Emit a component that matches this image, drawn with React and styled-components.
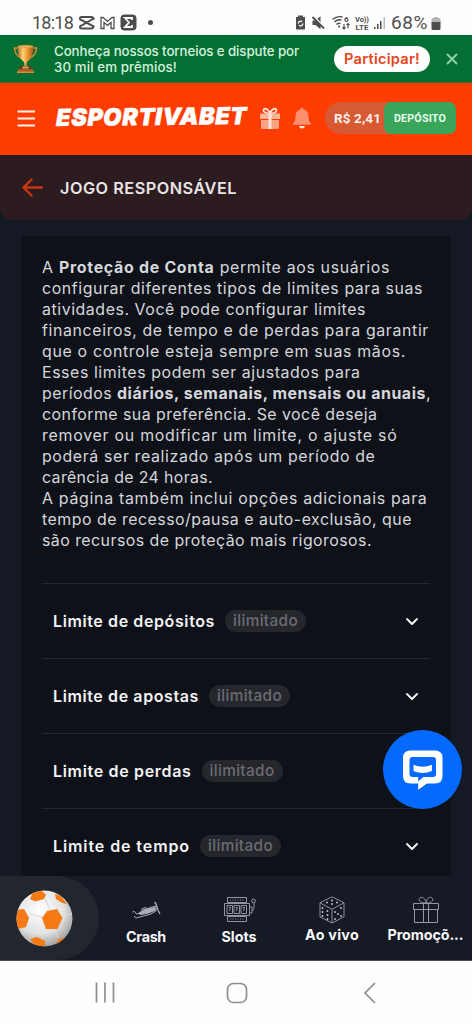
import React, { useLayoutEffect, useRef, useState } from 'react';
import styled, { createGlobalStyle } from 'styled-components';

const GlobalStyle = createGlobalStyle`
  * { box-sizing: border-box; }
  body {
    margin: 0;
    background: #fff;
    font-family: Inter, 'Open Sans', sans-serif;
  }
  button {
    border: 0;
    padding: 0;
    background: none;
    font-family: inherit;
    color: inherit;
    cursor: pointer;
  }
  svg { display: block; flex: none; }
`;

const Screen = styled.div`
  display: flex;
  flex-direction: column;
  width: 472px;
  height: 1024px;
  overflow: hidden;
  background: #141923;
`;

const FitSpan = styled.span`
  display: inline-block;
  white-space: pre;
  font-weight: ${(p) => p.$weight || 'inherit'};
`;

// Tracks the text out so that it fills the given width
function Fit({ w, weight, children }) {
  const ref = useRef(null);
  const [spacing, setSpacing] = useState(0);
  useLayoutEffect(() => {
    const natural = ref.current.getBoundingClientRect().width;
    setSpacing((w - natural) / children.length);
  }, []);
  return (
    <FitSpan ref={ref} $weight={weight} style={{ letterSpacing: `${spacing}px` }}>
      {children}
    </FitSpan>
  );
}

/* status bar */

const StatusBar = styled.div`
  display: flex;
  justify-content: space-between;
  flex: none;
  height: 35px;
  padding: 11px 31px 0 32px;
  background: #fefefe;
  color: #505050;
  font-family: Roboto, sans-serif;
  font-size: 18px;
  line-height: 24px;
`;

const StatusGroup = styled.div`
  display: flex;
  align-items: center;
  gap: ${(p) => p.$gap}px;
  height: 24px;
`;

const Percent = styled.span`
  font-size: 19px;
`;

/* tournament banner */

const Banner = styled.div`
  display: flex;
  align-items: center;
  flex: none;
  height: 48px;
  padding: 0 13px;
  background: #046f33;
  border-bottom: 1px solid #3c6a22;
`;

const BannerText = styled.div`
  width: 280px;
  margin-left: 16px;
  color: #d3f3df;
  font-size: 13.3px;
  font-weight: 500;
  line-height: 16px;
`;

const JoinButton = styled.button`
  width: 96px;
  height: 26px;
  border-radius: 13px;
  background: #fff;
  color: #e8431d;
  font-size: 14.6px;
  font-weight: 600;
`;

const CloseButton = styled.button`
  margin-left: 16px;
`;

/* main header */

const Header = styled.header`
  display: flex;
  align-items: center;
  flex: none;
  height: 72px;
  padding: 0 16px 2px 17px;
  background: #ff3d03;
`;

const Logo = styled.div`
  width: 192px;
  height: 26px;
  margin: -2px 11px 0 20px;
  color: #fff;
  font-size: 23.5px;
  font-style: italic;
  font-weight: 900;
  line-height: 26px;
  transform: skewY(-0.6deg);
  -webkit-text-stroke: 0.5px #fff;
`;

const Wallet = styled.div`
  display: flex;
  align-items: center;
  width: 131px;
  height: 32px;
  margin-left: 12px;
  border-radius: 16px 9px 9px 16px;
  background: #d85a35;
`;

const Balance = styled.span`
  width: 59px;
  padding-left: 9px;
  color: #fff0e8;
  font-family: Roboto, sans-serif;
  font-size: 13.5px;
  font-weight: 700;
`;

const DepositButton = styled.button`
  width: 72px;
  height: 32px;
  border-radius: 7px;
  background: #38a55a;
  color: #e8ffed;
  font-family: Roboto, sans-serif;
  font-size: 10.7px;
  font-weight: 700;
`;

/* page */

const TitleBar = styled.div`
  display: flex;
  align-items: center;
  flex: none;
  gap: 17px;
  height: 65px;
  padding: 0 22px;
  border-radius: 0 0 12px 12px;
  background: #2c1b1f;
`;

const Title = styled.h1`
  margin: 0;
  color: #eae4e6;
  font-size: 16.3px;
  font-weight: 600;
  line-height: 20px;
`;

const Panel = styled.main`
  flex: none;
  width: 430px;
  height: 640px;
  margin: 16px 0 0 21px;
  padding: 21px 21px 0;
  border-radius: 5px;
  background: #0e1118;
`;

const Intro = styled.div`
  margin-bottom: 32px;
  color: #d5d7dc;
  font-size: 15.9px;
  line-height: 21px;
`;

const Line = styled.div`
  display: flex;
  height: 21px;
`;

const LimitRow = styled.div`
  display: flex;
  align-items: center;
  height: 75px;
  padding: 0 11px 1px;
  border-top: 1px solid #24272e;
`;

const LimitName = styled.span`
  color: #f3f4f6;
  font-size: 16px;
  font-weight: 600;
`;

const Badge = styled.span`
  display: flex;
  align-items: center;
  justify-content: center;
  width: 81px;
  height: 22px;
  margin: 0 auto 0 10px;
  padding-bottom: 1px;
  border-radius: 11px;
  background: #25272d;
  color: #6a6c72;
  font-size: 15.3px;
  font-weight: 500;
`;

const ChatButton = styled.button`
  position: absolute;
  left: 383px;
  top: 730px;
  display: flex;
  align-items: center;
  justify-content: center;
  width: 79px;
  height: 79px;
  border-radius: 50%;
  background: #0669fd;
`;

/* bottom navigation */

const BottomNav = styled.nav`
  display: flex;
  flex: none;
  height: 85px;
  background: #151a25;
  border-bottom: 1px solid #4b4e55;
`;

const HomeTab = styled.div`
  display: flex;
  align-items: center;
  width: 99px;
  padding-left: 16px;
  border-radius: 0 42px 42px 0;
  background: #22262e;
`;

const Tab = styled.div`
  display: flex;
  flex-direction: column;
  align-items: center;
  width: ${(p) => p.$width}px;
  padding-top: 20px;
  color: #f7f8fa;
  font-size: 14.3px;
  font-weight: 700;
  line-height: 18px;
`;

const TabLabel = styled.span`
  margin-top: ${(p) => p.$top}px;
`;

const SystemNav = styled.div`
  display: flex;
  align-items: center;
  flex: none;
  height: 63px;
  padding-left: 95px;
  background: #fefefe;
`;

const Filler = styled.div`
  flex: 1;
  background: #fefefe;
`;

const Gap = styled.span`
  width: ${(p) => p.$width}px;
`;

function StatusLeftIcons() {
  return (
    <svg width="76" height="18" viewBox="0 0 76 18" fill="none" stroke="#4d4d4d">
      <path d="M14 6V4.500Q14 3 12.500 3H2.500Q1 3 1 4.500T2.500 6L14 12v1q0 1.500-1.500 1.500H2.500Q1 14.500 1 13T2.500 11.500L15.500 4M14 12l1.500 1" strokeWidth="2" />
      <path d="M22 14.500V3.500h2l4.500 4 4.500-4h2v11h-3V8.500l-3.500 3-3.500-3v6z" strokeWidth="1.300" />
      <rect x="42" y="1" width="15" height="15" rx="3" fill="#4d4d4d" />
      <path d="M53 6V4h-7l4 4.500-4 4.500h7v-2" stroke="#fff" strokeWidth="1.800" />
      <circle cx="71.500" cy="8.500" r="2.500" fill="#4d4d4d" stroke="none" />
    </svg>
  );
}

function StatusRightIcons() {
  return (
    <svg width="91" height="18" viewBox="0 0 91 18" fill="#4d4d4d">
      <path d="M0 3h2V1.500h5V3h2v12.500H0z" />
      <path d="M2.200 9.500a2.500 2.500 0 0 1 4-1.800M7 9.500a2.500 2.500 0 0 1-4 1.800" fill="none" stroke="#fff" strokeWidth="1.300" />
      <path d="M16.500 6.500h3l5-4.200v13L19.500 11h-3z" />
      <path d="M17.500 2l11 12" stroke="#fefefe" strokeWidth="2" />
      <path d="M16.500 3l11.500 11.500" stroke="#4d4d4d" strokeWidth="1.800" />
      <g fill="none" stroke="#4d4d4d" strokeWidth="1.400">
        <path d="M36.500 5.500q4.500-4 10-2.500M38.500 8q3-3 7-2M40.500 10.500q2-2 4-1M42 12.500h2" />
        <path d="M48 15v-5M46.500 13.500l1.500 1.500 1.500-1.500M52 9.500v5M50.500 11l1.500-1.500 1.500 1.500" strokeWidth="1.100" />
      </g>
      <text x="48" y="8" fontSize="8" fontWeight="700" fontFamily="Roboto">6</text>
      <text x="59" y="7.500" fontSize="7.500" fontWeight="700" fontFamily="Roboto" textLength="14">Vo))</text>
      <text x="59.500" y="15.500" fontSize="8" fontWeight="700" fontFamily="Roboto" textLength="13">LTE</text>
      <path d="M78 13h1.500v2H78zM81 10h1.500v5H81zM84 7h1.500v8H84z" />
      <path d="M87.500 3h1.500v12h-1.500z" fill="#b9b9b9" />
    </svg>
  );
}

function Battery() {
  return (
    <svg width="10" height="15" viewBox="0 0 10 15">
      <path d="M3 1h4v1h1.500Q9.500 2 9.500 3.500V7H.5V3.500Q.5 2 2 2h1z" fill="#b5b5b5" />
      <path d="M.5 6h9v6.500q0 1.500-1.500 1.500H2Q.5 14 .5 12.500z" fill="#4d4d4d" />
    </svg>
  );
}

function Trophy() {
  return (
    <svg width="25" height="30" viewBox="0 0 25 30">
      <defs>
        <linearGradient id="gold">
          <stop offset="0" stopColor="#b9681d" />
          <stop offset=".35" stopColor="#ffd277" />
          <stop offset=".6" stopColor="#ee9e36" />
          <stop offset="1" stopColor="#a8541a" />
        </linearGradient>
      </defs>
      <path d="M5 4H1.500Q1.500 11 8.500 14M20 4h3.500q0 7-7 10" fill="none" stroke="#d98c3c" strokeWidth="1.500" />
      <path d="M4.500 2h16q0 12-5.500 15-1.500 1-1.500 3v3h-2v-3q0-2-1.500-3Q4.500 14 4.500 2z" fill="url(#gold)" />
      <ellipse cx="12.500" cy="2.500" rx="8" ry="1.500" fill="#e9a854" />
      <path d="M7.500 22h10l1 3h-12z" fill="#6b3a20" />
      <path d="M9.500 22.500h6v2h-6z" fill="#eaa94a" />
      <path d="M5.500 25h14l1.500 3H4z" fill="#a95b27" />
      <path d="M4 27.500h17v1.500H4z" fill="#d88b45" />
    </svg>
  );
}

function MenuIcon() {
  return (
    <svg width="19" height="17" viewBox="0 0 19 17" stroke="#fff3e8" strokeWidth="2.200">
      <path d="M.5 1.500h17.500M.5 8.500h17.500M.5 15.500h17.500" />
    </svg>
  );
}

function GiftSolid() {
  return (
    <svg width="22" height="23" viewBox="0 0 22 23">
      <path d="M11 6.500C7 6.500 4 5 4.500 3S9 .8 11 6.500zM11 6.500c4 0 7-1.500 6.500-3.500S13 .8 11 6.500z" fill="none" stroke="#ffe4d8" strokeWidth="1.700" />
      <path d="M1 6.500h20v5.500H1z" fill="#ffb59c" />
      <path d="M2 13h18v7.500q0 1.500-1.500 1.500h-15Q2 22 2 20.500z" fill="#ffa183" />
      <path d="M9.500 6.500h3V22h-3z" fill="#ffe3d6" />
    </svg>
  );
}

function BellSolid() {
  return (
    <svg width="20" height="23" viewBox="0 0 20 23">
      <path d="M10 .5q1.500 0 1.500 2 5 1 5 7 0 5 2.300 6.500.8 1.800-.5 1.800H1.700q-1.300 0-.5-1.800Q3.500 14.500 3.500 9.500q0-6 5-7 0-2 1.500-2z" fill="#ff8f6d" />
      <path d="M7 19h6q-.5 2.500-3 2.500T7 19z" fill="#ffe3d8" />
    </svg>
  );
}

function BackArrow() {
  return (
    <svg width="21" height="19" viewBox="0 0 21 19" fill="none" stroke="#c93712" strokeWidth="2.400" strokeLinecap="round" strokeLinejoin="round">
      <path d="M19.800 9.500H2M9.500 1.500l-8 8 8 8" />
    </svg>
  );
}

function Chevron() {
  return (
    <svg width="14" height="10" viewBox="0 0 14 10" fill="none" stroke="#f1f2f4" strokeWidth="2" strokeLinecap="round" strokeLinejoin="round">
      <path d="M2 3L7 8l5-5" />
    </svg>
  );
}

function ChatIcon() {
  return (
    <svg width="40" height="40" viewBox="0 0 40 40">
      <path d="M7.500 .5h24.500q7.500 0 7.500 7.500v18q0 7.500-7.500 7.500h-8L15.200 39.800V33.500H7.500Q0 33.500 0 26V8Q0 .5 7.500 .5z" fill="#fff" />
      <path d="M9.500 7h20.500q3 0 3 3v14q0 3-3 3h-9.500l-5.300 4.200V27H9.500q-3 0-3-3V10q0-3 3-3z" fill="#0669fd" />
      <path d="M10.500 14.800q9.200 3.800 18.400 0v6.200q-9.200 4-18.400 0z" fill="#fff" />
    </svg>
  );
}

function Ball() {
  return (
    <svg width="57" height="57" viewBox="0 0 57 57">
      <defs>
        <radialGradient id="ball" cx=".42" cy=".35" r=".65">
          <stop offset="0" stopColor="#fff" />
          <stop offset=".65" stopColor="#e2e2e2" />
          <stop offset="1" stopColor="#a5a5a5" />
        </radialGradient>
        <clipPath id="ballClip"><circle cx="28.500" cy="28.500" r="28" /></clipPath>
      </defs>
      <circle cx="28.500" cy="28.500" r="28" fill="url(#ball)" />
      <g clipPath="url(#ballClip)">
        <path d="M14 24l12 3M12 38l6 9M39 39l3 9M46 28l10-5M34 20l-5-11" stroke="#dadada" strokeWidth="1" />
        <g fill="#f47a15">
          <path d="M17 2l8-1.500 5 4L28 9l-9 2.500-5-2.500z" />
          <path d="M39 4l6 2 6 8-5-1-6-4z" />
          <path d="M0 20l8-1 5 9-3 9-8 2-4-5z" />
          <path d="M26 28l5-7 10-2 5.500 9-5 11H30z" />
          <path d="M14 49l7-2 8 4 0 5-8 2z" />
          <path d="M40 53l3-4 7-2-4 7-5 2z" />
        </g>
      </g>
    </svg>
  );
}

function Plane() {
  return (
    <svg width="30" height="27" viewBox="0 0 30 27" fill="none" stroke="#a9adb7" strokeWidth="1" strokeLinejoin="round">
      <path d="M1.500 16l2-.5 2 2.500 6-1.500M3 20l2 2 15-4 5-3 0-5-6 1.500-8 4M10 13.500l4-2 3 1.500" />
      <path d="M8 17l5-3.500 4-.5 7-1.500v3l-8 3-7 1z" fill="#a9adb7" />
      <path d="M23.500 6q2 2 2.500 5t3 7" strokeWidth="1.400" />
    </svg>
  );
}

function Slots() {
  return (
    <svg width="33" height="27" viewBox="0 0 33 27" fill="none" stroke="#9196a0">
      <path d="M4.500 1.500h19v5h-19zM1.500 7.500h25v12h-25zM4.500 20.500h19v5h-19z" />
      <path d="M4 9.500h5.500v8H4zM11 9.500h5.500v8H11zM18 9.500h5.500v8H18zM5.500 11.500h2L6.500 15M12.500 11.500h2l-1 3.500M19.500 11.500h2l-1 3.500" />
      <path d="M7 4h15M7 23h15" strokeDasharray="1 1.500" />
      <path d="M27 11h2v6h-2M29 15q2.500-1 2-8" />
      <circle cx="30.500" cy="5" r="1.900" />
    </svg>
  );
}

function Dice() {
  const dots = [[9, 6.5], [14, 4.5], [19, 6.5], [14, 8], [4.5, 12], [4.5, 16], [4.5, 20], [9.5, 15], [9.5, 19], [9.5, 23], [17, 16], [23, 12], [20, 18], [23, 20], [17, 23]];
  return (
    <svg width="28" height="28" viewBox="0 0 28 28" fill="none" stroke="#8d929c">
      <path d="M14 .8l12 6v14L14 27 2 20.800v-14zM2 6.800l12 6.500 12-6.500M14 13.300V27" />
      {dots.map(([x, y]) => (
        <circle key={`${x}-${y}`} cx={x} cy={y} r=".95" fill="#c3c7cf" stroke="none" />
      ))}
    </svg>
  );
}

function GiftOutline() {
  return (
    <svg width="28" height="28" viewBox="0 0 28 28" fill="none" stroke="#9297a1">
      <path d="M1.500 7.500h25v6h-25zM2.500 13.500h23v13h-23zM11.500 7.500v19M16.500 7.500v19" />
      <path d="M14 7C9 7 6 5 7.500 2.500S13 1 14 7zM14 7c5 0 8-2 6.500-4.500S15 1 14 7z" />
    </svg>
  );
}

// [text, width, bold]
const introLines = [
  [['A ', 17], ['Proteção de Conta', 155.5, true], [' permite aos usuários', 175.5]],
  [['configurar diferentes tipos de limites para suas', 381]],
  [['atividades. Você pode configurar limites', 324]],
  [['financeiros, de tempo e de perdas para garantir', 387]],
  [['que o controle esteja sempre em suas mãos.', 364]],
  [['Esses limites podem ser ajustados para', 318.5]],
  [['períodos ', 75], ['diários, semanais, mensais ou anuais', 309, true], [',', 4]],
  [['conforme sua preferência. Se você deseja', 335.5]],
  [['remover ou modificar um limite, o ajuste só', 355.5]],
  [['poderá ser realizado após um período de', 333.5]],
  [['carência de 24 horas.', 171]],
  [['A página também inclui opções adicionais para', 385.5]],
  [['tempo de recesso/pausa e auto-exclusão, que', 370]],
  [['são recursos de proteção mais rigorosos.', 330]],
];

const limits = [
  { name: 'Limite de depósitos', w: 162 },
  { name: 'Limite de apostas', w: 146 },
  { name: 'Limite de perdas', w: 138.5 },
  { name: 'Limite de tempo', w: 137 },
];

function App() {
  return (
    <Screen>
      <GlobalStyle />
      <StatusBar>
        <StatusGroup $gap={6}>
          <Fit w={41}>18:18</Fit>
          <StatusLeftIcons />
        </StatusGroup>
        <StatusGroup $gap={4}>
          <StatusRightIcons />
          <StatusGroup $gap={3}>
            <Percent>
              <Fit w={37}>68%</Fit>
            </Percent>
            <Battery />
          </StatusGroup>
        </StatusGroup>
      </StatusBar>

      <Banner>
        <Trophy />
        <BannerText>
          <Fit w={245}>Conheça nossos torneios e dispute por</Fit>
          <Fit w={123}>30 mil em prêmios!</Fit>
        </BannerText>
        <JoinButton>
          <Fit w={76}>Participar!</Fit>
        </JoinButton>
        <CloseButton aria-label="Fechar">
          <svg width="12" height="12" viewBox="0 0 12 12" stroke="#8fd0a4" strokeWidth="1.900">
            <path d="M1 1l10 10M11 1L1 11" />
          </svg>
        </CloseButton>
      </Banner>

      <Header>
        <MenuIcon />
        <Logo>
          <Fit w={191}>ESPORTIVABET</Fit>
        </Logo>
        <GiftSolid />
        <Gap $width={11} />
        <BellSolid />
        <Gap $width={1} />
        <Wallet>
          <Balance>
            <Fit w={47}>R$ 2,41</Fit>
          </Balance>
          <DepositButton>
            <Fit w={52}>DEPÓSITO</Fit>
          </DepositButton>
        </Wallet>
      </Header>

      <TitleBar>
        <BackArrow />
        <Title>
          <Fit w={177}>JOGO RESPONSÁVEL</Fit>
        </Title>
      </TitleBar>

      <Panel>
        <Intro>
          {introLines.map((line) => (
            <Line key={line[0][0]}>
              {line.map(([text, w, bold]) => (
                <Fit key={text} w={w} weight={bold ? 700 : 400}>
                  {text}
                </Fit>
              ))}
            </Line>
          ))}
        </Intro>
        {limits.map((limit) => (
          <LimitRow key={limit.name}>
            <LimitName>
              <Fit w={limit.w}>{limit.name}</Fit>
            </LimitName>
            <Badge>
              <Fit w={65}>ilimitado</Fit>
            </Badge>
            <Chevron />
          </LimitRow>
        ))}
      </Panel>

      <BottomNav>
        <HomeTab>
          <Ball />
        </HomeTab>
        <Tab $width={94}>
          <Plane />
          <TabLabel $top={5}>
            <Fit w={40}>Crash</Fit>
          </TabLabel>
        </Tab>
        <Tab $width={92}>
          <Slots />
          <TabLabel $top={5}>
            <Fit w={35}>Slots</Fit>
          </TabLabel>
        </Tab>
        <Tab $width={94}>
          <Dice />
          <TabLabel $top={2}>
            <Fit w={54}>Ao vivo</Fit>
          </TabLabel>
        </Tab>
        <Tab $width={93}>
          <GiftOutline />
          <TabLabel $top={2}>
            <Fit w={76}>Promoçõ...</Fit>
          </TabLabel>
        </Tab>
      </BottomNav>

      <SystemNav>
        <svg width="20" height="21" viewBox="0 0 20 21" stroke="#8e8e8e" strokeWidth="1.700">
          <path d="M1.500 .5v20M10 .5v20M18.500 .5v20" />
        </svg>
        <Gap $width={111} />
        <svg width="22" height="22" viewBox="0 0 22 22" fill="none" stroke="#8e8e8e" strokeWidth="1.700">
          <rect x="1.500" y="1.500" width="19" height="19" rx="6" />
        </svg>
        <Gap $width={115} />
        <svg width="13" height="22" viewBox="0 0 13 22" fill="none" stroke="#8e8e8e" strokeWidth="1.700">
          <path d="M12 1L2 11l10 10" />
        </svg>
      </SystemNav>
      <Filler />

      <ChatButton aria-label="Chat">
        <ChatIcon />
      </ChatButton>
    </Screen>
  );
}

export default App;
